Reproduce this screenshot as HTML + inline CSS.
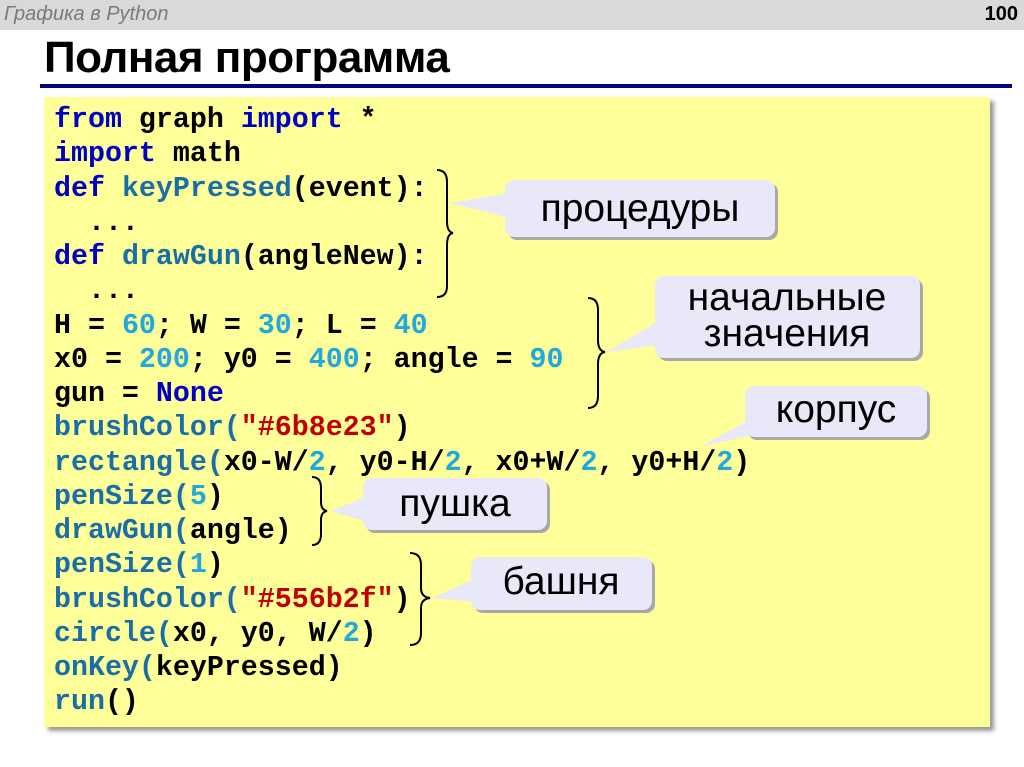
<!DOCTYPE html>
<html><head><meta charset="utf-8"><style>
body{margin:0;width:1024px;height:767px;background:#fff;position:relative;overflow:hidden;font-family:"Liberation Sans",sans-serif}
.hdr{position:absolute;left:0;top:0;width:1024px;height:30px;background:#d9d9d9}
.hdr .l{position:absolute;left:4px;top:3px;font-size:20px;font-style:italic;color:#7a7a7a}
.hdr .r{position:absolute;right:6px;top:3px;font-size:20px;font-weight:bold;color:#000}
h1{position:absolute;left:44px;top:33px;margin:0;font-size:44px;font-weight:bold;color:#000;letter-spacing:-0.5px}
.line{position:absolute;left:40px;top:84px;width:972px;height:4px;background:#000080}
.code{position:absolute;left:44px;top:97px;width:946px;height:630px;background:#ffff99;box-shadow:4px 4px 4px #9a9a9a}
pre{position:absolute;left:54px;top:103px;margin:0;font-family:"Liberation Mono",monospace;font-weight:bold;font-size:28.3px;line-height:34.25px;color:#000}
.k{color:#0000c0}.f{color:#1a6ea8}.n{color:#22a8dc}.s{color:#c00000}
svg{position:absolute;left:0;top:0}
</style></head><body>
<div class="hdr"><span class="l">Графика в Python</span><span class="r">100</span></div>
<h1>Полная программа</h1>
<div class="line"></div>
<div class="code"></div>
<pre><span class="k">from</span> graph <span class="k">import</span> *
<span class="k">import</span> math
<span class="k">def</span> <span class="f">keyPressed</span>(event):
  ...
<span class="k">def</span> <span class="f">drawGun</span>(angleNew):
  ...
H = <span class="n">60</span>; W = <span class="n">30</span>; L = <span class="n">40</span>
x0 = <span class="n">200</span>; y0 = <span class="n">400</span>; angle = <span class="n">90</span>
gun = <span class="k">None</span>
<span class="f">brushColor(</span><span class="s">"#6b8e23"</span>)
<span class="f">rectangle(</span>x0-W/<span class="n">2</span>, y0-H/<span class="n">2</span>, x0+W/<span class="n">2</span>, y0+H/<span class="n">2</span>)
<span class="f">penSize(</span><span class="n">5</span>)
<span class="f">drawGun(</span>angle)
<span class="f">penSize(</span><span class="n">1</span>)
<span class="f">brushColor(</span><span class="s">"#556b2f"</span>)
<span class="f">circle(</span>x0, y0, W/<span class="n">2</span>)
<span class="f">onKey(</span>keyPressed)
<span class="f">run</span>()</pre>
<svg width="1024" height="767" font-family="Liberation Sans, sans-serif" font-size="39">
<g fill="none" stroke="#000" stroke-width="2">
<path d="M437 170 Q447 170 447 182 L447 221 Q447 232 453 233 Q447 234 447 245 L447 286 Q447 297 437 297"/>
<path d="M588 298 Q598 298 598 310 L598 340 Q598 351 605 352 Q598 353 598 364 L598 396 Q598 408 588 408"/>
<path d="M312 477 Q321 477 321 488 L321 502 Q321 510 327 511 Q321 512 321 520 L321 534 Q321 545 312 545"/>
<path d="M410 553 Q421 553 421 565 L421 588 Q421 597 430 598 Q421 599 421 608 L421 633 Q421 645 410 645"/>
</g>
<g fill="#a8a8a8" transform="translate(3,3)">
<rect x="505" y="180" width="270" height="57" rx="9"/>
<rect x="655" y="276" width="265" height="82" rx="9"/>
<rect x="745" y="386" width="182" height="51" rx="9"/>
<rect x="363" y="478" width="184" height="52" rx="9"/>
<rect x="471" y="557" width="181" height="53" rx="9"/>
</g>
<g fill="#e8e8f8">
<rect x="505" y="180" width="270" height="57" rx="9"/>
<polygon points="450,203 510,193 510,218"/>
<rect x="655" y="276" width="265" height="82" rx="9"/>
<polygon points="606,352 660,320 660,345"/>
<rect x="745" y="386" width="182" height="51" rx="9"/>
<polygon points="700,447 752,418 765,432"/>
<rect x="363" y="478" width="184" height="52" rx="9"/>
<polygon points="330,511 368,496 368,522"/>
<rect x="471" y="557" width="181" height="53" rx="9"/>
<polygon points="432,598 476,578 476,602"/>
</g>
<g fill="#000" text-anchor="middle">
<text x="640" y="221">процедуры</text>
<text x="787" y="310">начальные</text>
<text x="787" y="346">значения</text>
<text x="836" y="422">корпус</text>
<text x="455" y="516">пушка</text>
<text x="561" y="594">башня</text>
</g>
</svg>
</body></html>
